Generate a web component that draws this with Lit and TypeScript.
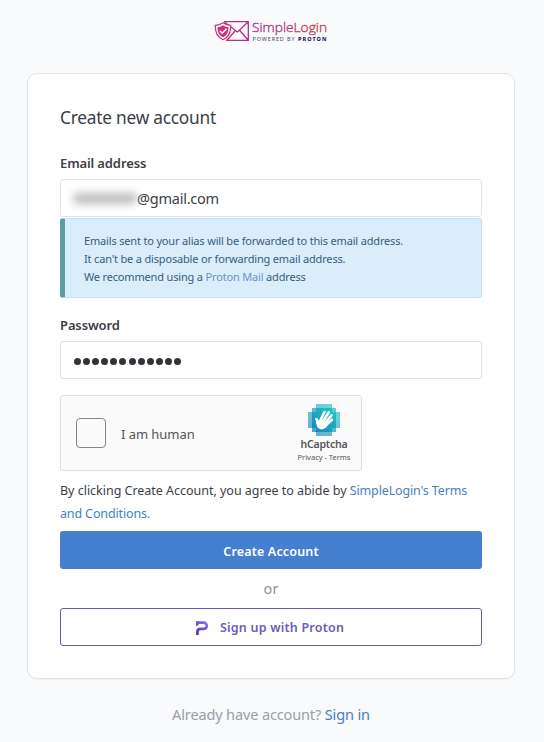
import { LitElement, html, css, svg } from "lit";
import { customElement } from "lit/decorators.js";

// Pixel mosaic behind the hCaptcha hand: inset (in cells) of each row.
const INSETS = [2, 1, 0, 0, 0, 0, 1, 2];
const cells = INSETS.flatMap((inset, row) =>
  Array.from({ length: 8 - inset * 2 }, (_, i) => {
    const col = inset + i;
    const rim = row === 0 || row === 7 || col === 0 || col === 7;
    const corner = (row === 1 || row === 6) && (col === 1 || col === 6);
    return { row, col, opacity: rim ? 0.65 : corner ? 0.75 : 1 };
  }),
);

@customElement("captcha-logo")
class CaptchaLogo extends LitElement {
  static styles = css`
    :host { display: block; width: 32px; height: 33px; }
    svg { display: block; }
  `;
  render() {
    return html`<svg width="32" height="32" viewBox="0 0 32 32">
      <defs>
        <linearGradient id="g" gradientUnits="userSpaceOnUse" x1="27" y1="3" x2="7" y2="29">
          <stop offset="0" stop-color="#22c6c4" />
          <stop offset="1" stop-color="#1787b8" />
        </linearGradient>
      </defs>
      ${cells.map(
        (c) => svg`<rect x=${c.col * 4} y=${c.row * 4} width="4" height="4" shape-rendering="crispEdges" fill="url(#g)" opacity=${c.opacity} />`,
      )}
      <path d="M12 17L16.500 8M14.500 18L20.800 8.300M16.500 19.500L23.600 11.300M18 21L24 15.800M10.500 20.500L8.500 15" stroke="#fff" stroke-width="2.600" stroke-linecap="round" />
      <path fill="#fff" d="M9 17L12.500 16L19.500 18L19.600 21.300C17.700 25.300 13.300 26.500 10.400 24.300C8.600 22.700 8.500 20 8 17.500Z" />
    </svg>`;
  }
}

@customElement("app-root")
class AppRoot extends LitElement {
  static styles = css`
    :host {
      display: flex; flex-direction: column; align-items: center;
      box-sizing: border-box; width: 544px; height: 742px; padding: 19px 2px 0 0;
      background: #f8fafc; color: #3b4046; overflow: hidden;
      font-family: "Noto Sans", "Open Sans", sans-serif;
    }
    * { box-sizing: border-box; }
    a { color: #467fbf; text-decoration: none; }
    .brand { display: block; flex: none; overflow: visible; }
    .word { font-family: "Open Sans", "Noto Sans", sans-serif; font-weight: 300; }
    .card {
      flex: none; width: 488px; height: 606px; margin-top: 30px; padding: 31px 32px 0;
      background: #fff; border: 1px solid #dfe4e8; border-radius: 10px;
      box-shadow: 0 1px 2px rgba(0, 0, 0, .04);
    }
    h1 { margin: 0; height: 27px; font-size: 17.300px; line-height: 26px; font-weight: 400; letter-spacing: -.23px; }
    label { display: block; height: 22px; font-size: 13px; line-height: 22px; font-weight: 600; letter-spacing: -.12px; }
    .email-label { margin: 20px 0 5px; }
    .field {
      display: flex; align-items: center; width: 422px; height: 38px; margin-top: 4px; padding: 0 12px;
      border: 1px solid #dfe3e8; border-radius: 3px; font-size: 14.500px; letter-spacing: -.25px;
    }
    .masked { width: 64px; height: 11px; background: #999; filter: blur(4px); opacity: .65; border-radius: 5px; }
    .notice {
      width: 422px; height: 80px; margin-top: 1px; padding: 13px 0 0 19px;
      background: #daedfb; border: 1px solid #c4dff0; border-left: 5px solid #5e9c9e; border-radius: 3px;
      color: #36607c; font-size: 11px; line-height: 18px; white-space: nowrap; letter-spacing: -.17px;
    }
    .notice a { color: #6c92c9; }
    .pw-label { margin-top: 16px; }
    .dots { gap: 2.100px; margin-top: 5px; padding: 2px 0 0 13px; }
    .dots i { width: 7px; height: 7px; border-radius: 50%; background: #303438; }
    .captcha {
      display: flex; width: 302px; height: 76px; margin-top: 16px; padding-left: 15px; align-items: center;
      border: 1px solid #dedede; border-radius: 3px; background: #fafafa; color: #555;
    }
    .check { width: 30px; height: 30px; border: 1px solid #858585; border-radius: 4px; background: #fafafa; }
    .human { width: 172px; margin-left: 15px; padding-top: 2px; font-size: 13px; letter-spacing: -.05px; }
    .seal { display: flex; flex-direction: column; align-items: center; width: 62px; height: 74px; padding-top: 8px; white-space: nowrap; }
    .seal b { font-size: 10.500px; line-height: 14px; font-weight: 600; letter-spacing: -.2px; }
    .seal small { font-size: 7.500px; line-height: 12px; }
    .terms { margin: 8px 0 0; font-size: 12.500px; line-height: 23px; white-space: nowrap; letter-spacing: -.02px; }
    .terms a { letter-spacing: -.14px; }
    .btn {
      display: flex; align-items: center; justify-content: center; width: 422px; height: 38px;
      border-radius: 3px; font-size: 12.500px; font-weight: 600;
    }
    .primary { margin-top: 6px; padding-top: 2px; background: #467fcf; color: #fff; letter-spacing: .16px; }
    .or { height: 39px; line-height: 39px; text-align: center; color: #8f959b; font-size: 14.500px; }
    .proton { border: 1px solid #7453b5; color: #6d5bc0; letter-spacing: .22px; }
    .proton svg { margin: 2px 11px 0 -3px; }
    .signin { margin-top: 23px; font-size: 14.500px; line-height: 24px; color: #9aa0a6; white-space: nowrap; letter-spacing: -.13px; }
  `;

  render() {
    return html`
      <svg class="brand" width="112" height="24" viewBox="0 0 112 24">
        <defs>
          <linearGradient id="brand" gradientUnits="userSpaceOnUse" x1="0" y1="0" x2="34" y2="0">
            <stop offset="0" stop-color="#d03078" /><stop offset="1" stop-color="#b02a88" />
          </linearGradient>
          <linearGradient id="word"><stop offset="0" stop-color="#a02a96" /><stop offset="1" stop-color="#c93440" /></linearGradient>
        </defs>
        <g fill="none" stroke="url(#brand)" stroke-width="1.300">
          <path d="M9 2.700H33.300V21.300H11M9 2.700L22.500 13L33.300 2.700M33.300 21.300L24.500 11.300M12 21L20.500 11.500" />
        </g>
        <path d="M8 3.800C5.500 5.500 3.200 6.200 .3 6.300C0 13 1.800 18 8 20.700C14.200 18 16 13 15.700 6.300C12.800 6.200 10.500 5.500 8 3.800Z" fill="#f8fafc" stroke="#cf2f78" stroke-width="1.200" />
        <path d="M8 6.200C6.300 7.400 4.600 8 2.500 8.200C2.500 13 3.800 16.200 8 18.300C12.200 16.200 13.500 13 13.500 8.200C11.400 8 9.700 7.400 8 6.200Z" fill="#cf2f78" />
        <path d="M4.800 11.700L7.300 14.200L11.500 9.800" fill="none" stroke="#fff" stroke-width="1.600" />
        <text class="word" x="37" y="13" font-size="13.600" textLength="75" lengthAdjust="spacingAndGlyphs" fill="url(#word)" stroke="url(#word)" stroke-width=".3">SimpleLogin</text>
        <text x="37.500" y="21.500" font-size="5.500" textLength="42" fill="#4a4560">POWERED BY</text>
        <text x="83" y="21.500" font-size="5.500" font-weight="800" textLength="28.500" fill="#29204f">PROTON</text>
      </svg>
      <main class="card">
        <h1>Create new account</h1>
        <label class="email-label">Email address</label>
        <div class="field"><span class="masked"></span><span>@gmail.com</span></div>
        <div class="notice">
          Emails sent to your alias will be forwarded to this email address.<br />
          It can't be a disposable or forwarding email address.<br />
          We recommend using a <a>Proton Mail</a> address
        </div>
        <label class="pw-label">Password</label>
        <div class="field dots">${Array.from({ length: 12 }, () => html`<i></i>`)}</div>
        <div class="captcha">
          <span class="check"></span><span class="human">I am human</span>
          <div class="seal"><captcha-logo></captcha-logo><b>hCaptcha</b><small>Privacy - Terms</small></div>
        </div>
        <p class="terms">By clicking Create Account, you agree to abide by <a>SimpleLogin's Terms<br />and Conditions.</a></p>
        <div class="btn primary">Create Account</div>
        <div class="or">or</div>
        <div class="btn proton">
          <svg width="14" height="16" viewBox="0 0 14 16">
            <defs>
              <linearGradient id="p" gradientUnits="userSpaceOnUse" x1="11" y1="2" x2="2" y2="14"><stop offset="0" stop-color="#8474e4" /><stop offset="1" stop-color="#5530b8" /></linearGradient>
            </defs>
            <path d="M1 2.700H8.700A3.100 3.100 0 0 1 8.700 8.900H5.500Q2.400 8.900 2.400 12V15" fill="none" stroke="url(#p)" stroke-width="2.700" />
            <path d="M1 1.400H3.700V5L1 6.200Z" fill="url(#p)" />
          </svg>
          <span>Sign up with Proton</span>
        </div>
      </main>
      <div class="signin">Already have account? <a>Sign in</a></div>
    `;
  }
}
